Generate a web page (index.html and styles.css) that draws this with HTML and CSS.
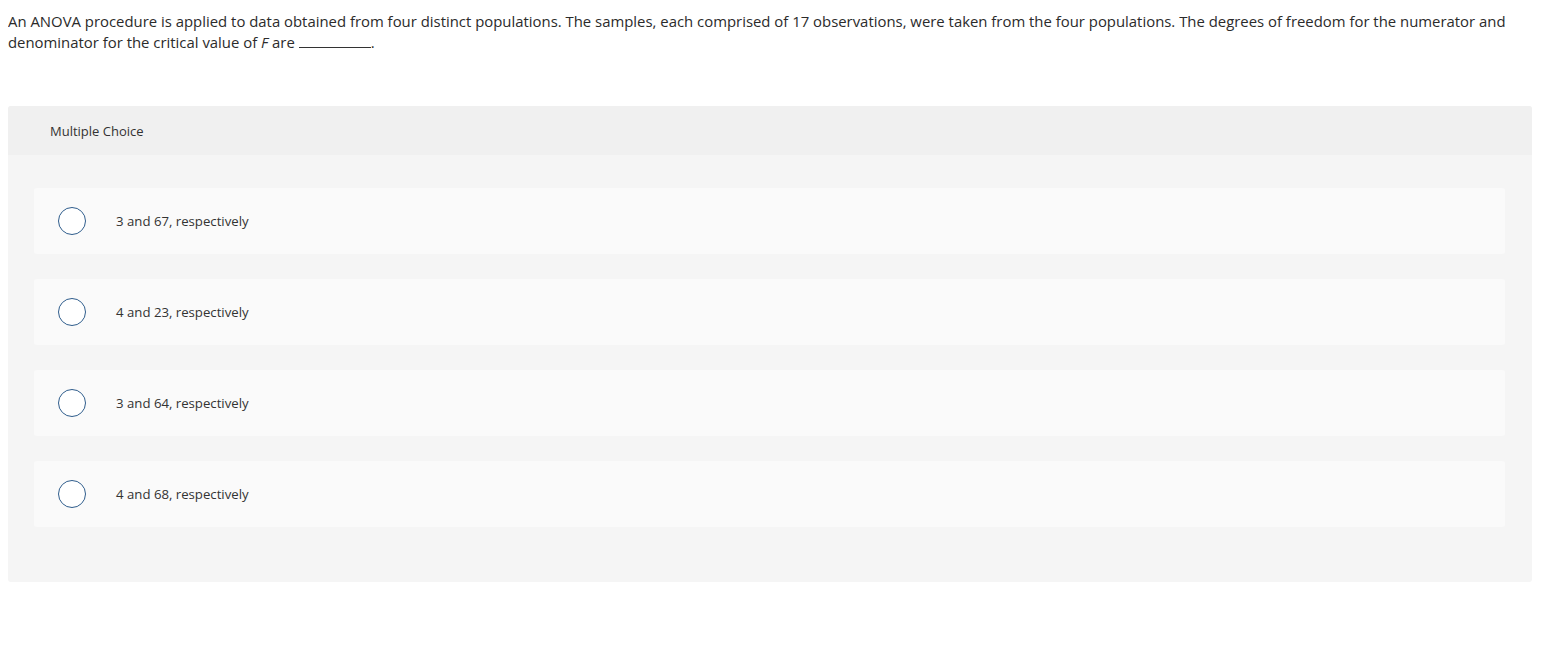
FILE: index.html
```html
<!DOCTYPE html>
<html>
<head>
<meta charset="utf-8">
<link rel="stylesheet" href="styles.css">
</head>
<body>
<div class="question"><span>An ANOVA procedure is applied to data obtained from four distinct populations. The samples, each comprised of 17 observations, were taken from the four populations. The degrees of freedom for the numerator and</span> <span>denominator for the critical value of</span> <i class="var">F</i> <span>are</span> <span class="blank"></span><span class="dot">.</span></div>
<div class="mc">
  <div class="mc-head">Multiple Choice</div>
  <div class="mc-body">
    <div class="opt"><span class="radio"></span><span class="label">3 and 67, respectively</span></div>
    <div class="opt"><span class="radio"></span><span class="label">4 and 23, respectively</span></div>
    <div class="opt"><span class="radio"></span><span class="label">3 and 64, respectively</span></div>
    <div class="opt"><span class="radio"></span><span class="label">4 and 68, respectively</span></div>
  </div>
</div>
</body>
</html>
```
FILE: styles.css
```css
body {
  margin: 8px;
  font-family: "Open Sans", Lato, sans-serif;
  color: #2b2b2b;
  background: #fff;
}
.question {
  font-size: 14.9px;
  line-height: 21px;
  margin-top: 3px;
  padding-right: 20px;
}
.var { font-style: italic; }
.blank {
  display: inline-block;
  width: 72px;
  border-bottom: 1px solid #333;
}
.mc {
  margin-top: 53px;
  width: 1524px;
  background: #f5f5f5;
  border-radius: 3px;
  overflow: hidden;
}
.mc-head {
  background: #f0f0f0;
  height: 49px;
  padding-left: 42px;
  display: flex;
  align-items: center;
  font-size: 13px;
  color: #333;
}
.mc-body {
  padding: 33px 27px 55px 26px;
  display: flex;
  flex-direction: column;
  gap: 25px;
}
.opt {
  background: #fafafa;
  border-radius: 3px;
  height: 66px;
  display: flex;
  align-items: center;
  padding-left: 24px;
}
.radio {
  width: 26px;
  height: 26px;
  border: 1.5px solid #2f5d8c;
  border-radius: 50%;
  background: #fff;
  flex: none;
}
.label {
  margin-left: 30px;
  font-size: 13.2px;
  color: #333;
}
```
